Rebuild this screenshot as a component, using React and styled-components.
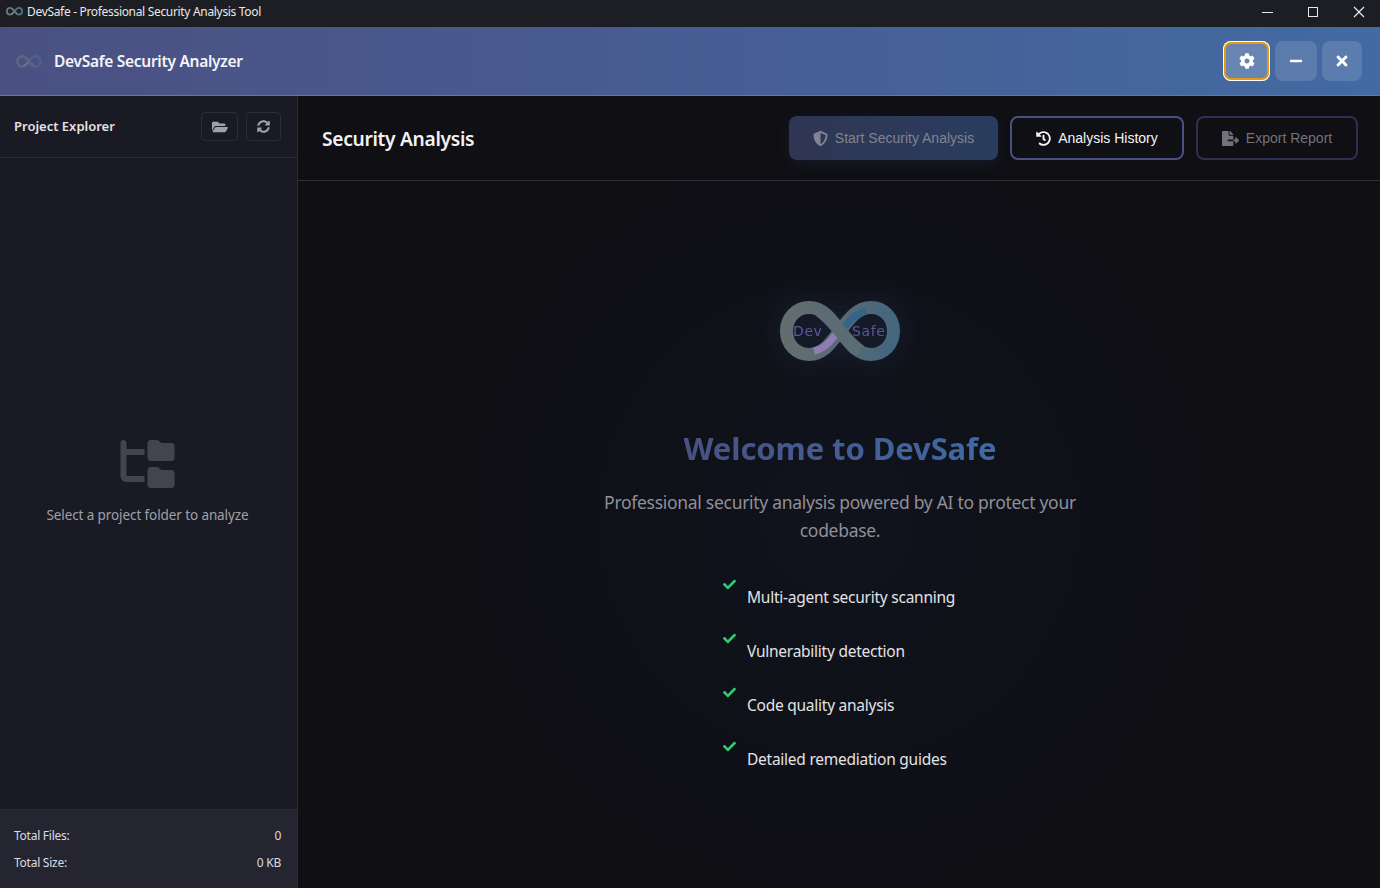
import React from 'react'
import styled, { createGlobalStyle } from 'styled-components'
import {
  FaCheck,
  FaCog,
  FaFileExport,
  FaFolderOpen,
  FaHistory,
  FaMinus,
  FaShieldAlt,
  FaSyncAlt,
  FaTimes,
} from 'react-icons/fa'
import { FaFolderTree } from 'react-icons/fa6'
import { VscChromeClose, VscChromeMaximize, VscChromeMinimize } from 'react-icons/vsc'

const FEATURES = [
  'Multi-agent security scanning',
  'Vulnerability detection',
  'Code quality analysis',
  'Detailed remediation guides',
]

const Logo = ({ size = 120, text = true, id = 'logo' }) => (
  <svg width={size} height={size * 0.5} viewBox="0 0 120 60" fill="none">
    <defs>
      <linearGradient id={`${id}-a`} x1="0" y1="0" x2="1" y2="0">
        <stop offset="0" stopColor="#6d7877" />
        <stop offset="0.55" stopColor="#5f7480" />
        <stop offset="1" stopColor="#4a7089" />
      </linearGradient>
    </defs>
    {/* whole figure of eight */}
    <path
      d="M60 30 C51 18 43 6.5 29 6.5 C16 6.5 6.5 17 6.5 30 C6.5 43 16 53.5 29 53.5 C43 53.5 51 42 60 30 C69 18 77 6.5 91 6.5 C104 6.5 113.5 17 113.5 30 C113.5 43 104 53.5 91 53.5 C77 53.5 69 42 60 30 Z"
      stroke={`url(#${id}-a)`}
      strokeWidth="13"
    />
    {/* coloured inner edges next to the crossing */}
    <path d="M34 50 C44 48 50 41 57 32" stroke="#9d88c6" strokeWidth="7" />
    <path d="M63 28 C69 20 75 13 86 10" stroke="#3c6c92" strokeWidth="7" />
    {/* strand on top at the crossing */}
    <path d="M40 10 C47 15 52 20 60 30 C68 40 73 45 80 50" stroke="#647680" strokeWidth="13" />
    {text && (
      <>
        <LogoText x="13" y="35">Dev</LogoText>
        <LogoText x="72" y="35">Safe</LogoText>
      </>
    )}
  </svg>
)

const App = () => {
  return (
    <>
      <GlobalStyle />
      <Window>
        <TitleBar>
          <TitleLeft>
            <Logo size={17} text={false} id="title-logo" />
            <span>DevSafe - Professional Security Analysis Tool</span>
          </TitleLeft>
          <WindowControls>
            <WindowControl><VscChromeMinimize /></WindowControl>
            <WindowControl><VscChromeMaximize /></WindowControl>
            <WindowControl><VscChromeClose /></WindowControl>
          </WindowControls>
        </TitleBar>

        <AppHeader>
          <Brand>
            <BrandLogo><Logo size={26} text={false} id="brand-logo" /></BrandLogo>
            <h1>DevSafe Security Analyzer</h1>
          </Brand>
          <HeaderActions>
            <HeaderButton $focused><FaCog /></HeaderButton>
            <HeaderButton><FaMinus /></HeaderButton>
            <HeaderButton $narrow><FaTimes /></HeaderButton>
          </HeaderActions>
        </AppHeader>

        <Body>
          <Sidebar>
            <SidebarHeader>
              <h3>Project Explorer</h3>
              <SidebarTools>
                <ToolButton $wide><FaFolderOpen /></ToolButton>
                <ToolButton><FaSyncAlt /></ToolButton>
              </SidebarTools>
            </SidebarHeader>
            <EmptyTree>
              <FaFolderTree />
              <p>Select a project folder to analyze</p>
            </EmptyTree>
            <Stats>
              <StatRow><span>Total Files:</span><span>0</span></StatRow>
              <StatRow><span>Total Size:</span><span>0 KB</span></StatRow>
            </Stats>
          </Sidebar>

          <Main>
            <MainHeader>
              <h2>Security Analysis</h2>
              <MainActions>
                <PrimaryButton><FaShieldAlt />Start Security Analysis</PrimaryButton>
                <OutlineButton><FaHistory />Analysis History</OutlineButton>
                <OutlineButton $disabled><FaFileExport />Export Report</OutlineButton>
              </MainActions>
            </MainHeader>
            <Welcome>
              <WelcomeLogo><Logo size={120} id="welcome-logo" /></WelcomeLogo>
              <WelcomeTitle>Welcome to DevSafe</WelcomeTitle>
              <WelcomeText>
                Professional security analysis powered by AI to protect your codebase.
              </WelcomeText>
              <FeatureList>
                {FEATURES.map((feature) => (
                  <Feature key={feature}>
                    <FaCheck />
                    <span>{feature}</span>
                  </Feature>
                ))}
              </FeatureList>
            </Welcome>
          </Main>
        </Body>
      </Window>
    </>
  )
}

const GlobalStyle = createGlobalStyle`
  html,
  body {
    margin: 0;
    height: 100%;
    background: #0f0f14;
  }

  #root {
    height: 100%;
  }

  * {
    box-sizing: border-box;
  }
`

const Window = styled.div`
  display: flex;
  flex-direction: column;
  height: 888px;
  overflow: hidden;
  font-family: 'Noto Sans', 'Open Sans', sans-serif;
  color: #fff;
`

const LogoText = styled.text`
  font-family: 'DejaVu Sans', sans-serif;
  font-size: 14px;
  letter-spacing: 0.6px;
  fill: #6060aa;
`

const TitleBar = styled.div`
  display: flex;
  align-items: center;
  justify-content: space-between;
  height: 27px;
  flex-shrink: 0;
  background: #1c1e24;
`

const TitleLeft = styled.div`
  display: flex;
  align-items: center;
  gap: 4px;
  padding: 0 0 4px 6px;
  font-size: 12px;
  letter-spacing: -0.32px;
  color: #e8e8ea;
`

const WindowControls = styled.div`
  display: flex;
  height: 100%;
  margin-right: -2px;
`

const WindowControl = styled.div`
  display: flex;
  align-items: center;
  justify-content: center;
  width: 46px;
  height: 23px;
  font-size: 16px;
  color: #e8e8e8;
`

const AppHeader = styled.header`
  display: flex;
  align-items: center;
  justify-content: space-between;
  height: 69px;
  flex-shrink: 0;
  padding: 0 18px 0 16px;
  background: linear-gradient(90deg, #4b5082 0%, #436aa3 100%);
  border-bottom: 1px solid #5f79a8;
`

const Brand = styled.div`
  display: flex;
  align-items: center;
  gap: 12px;

  h1 {
    margin: 0;
    font-size: 15.5px;
    font-weight: 600;
    letter-spacing: -0.28px;
    color: #f4f5f9;
  }
`

const BrandLogo = styled.div`
  display: flex;
  opacity: 0.55;
  filter: blur(0.5px);
`

const HeaderActions = styled.div`
  display: flex;
  align-items: center;
  gap: 5px;
`

const HeaderButton = styled.button`
  display: flex;
  align-items: center;
  justify-content: center;
  width: ${({ $narrow, $focused }) => ($narrow ? '40px' : $focused ? '47px' : '42px')};
  height: 40px;
  padding: 0;
  border: none;
  border-radius: 8px;
  background: rgba(255, 255, 255, ${({ $focused }) => ($focused ? 0.2 : 0.13)});
  color: #fff;
  font-size: ${({ $narrow, $focused }) => ($narrow || $focused ? '16px' : '14px')};
  ${({ $focused }) => $focused && 'box-shadow: inset 0 0 0 1px #fff, inset 0 0 0 3px #e49b0f;'}
`

const Body = styled.div`
  display: flex;
  flex: 1;
  min-height: 0;
`

const Sidebar = styled.aside`
  display: flex;
  flex-direction: column;
  width: 298px;
  flex-shrink: 0;
  background: #1a1a24;
  border-right: 1px solid #2b2b37;
`

const SidebarHeader = styled.div`
  display: flex;
  align-items: center;
  justify-content: space-between;
  height: 62px;
  flex-shrink: 0;
  padding: 0 16px 0 14px;
  border-bottom: 1px solid #2b2b37;

  h3 {
    margin: 0 0 2px;
    font-size: 13px;
    font-weight: 600;
    color: #e2e2e6;
  }
`

const SidebarTools = styled.div`
  display: flex;
  gap: 8px;
`

const ToolButton = styled.button`
  display: flex;
  align-items: center;
  justify-content: center;
  width: ${({ $wide }) => ($wide ? '37px' : '35px')};
  height: 29px;
  padding: 0;
  background: transparent;
  border: 1px solid #2d2d3a;
  border-radius: 4px;
  color: #a0a0a8;
  font-size: ${({ $wide }) => ($wide ? '16px' : '13px')};
`

const EmptyTree = styled.div`
  display: flex;
  flex: 1;
  flex-direction: column;
  align-items: center;
  justify-content: center;
  padding: 0 2px 3px 0;
  color: #44444f;

  svg {
    width: 55px;
    height: 48px;
    margin-bottom: 18px;
  }

  p {
    margin: 0;
    font-size: 13.5px;
    letter-spacing: -0.1px;
    color: #a0a0a8;
  }
`

const Stats = styled.div`
  display: flex;
  flex-direction: column;
  gap: 9px;
  height: 79px;
  flex-shrink: 0;
  padding: 17px 16px 0 14px;
  background: #252532;
  border-top: 1px solid #2d2d3a;
`

const StatRow = styled.div`
  display: flex;
  justify-content: space-between;
  font-size: 12px;
  line-height: 18px;
  letter-spacing: -0.25px;
  color: #dcdce0;
`

const Main = styled.main`
  display: flex;
  flex: 1;
  flex-direction: column;
  min-width: 0;
  background: #0f0f14;
`

const MainHeader = styled.div`
  display: flex;
  align-items: center;
  justify-content: space-between;
  height: 85px;
  flex-shrink: 0;
  padding: 0 22px 0 24px;
  border-bottom: 1px solid #2d2d3a;

  h2 {
    margin: 1px 0 0;
    font-size: 19.2px;
    font-weight: 600;
    letter-spacing: -0.3px;
    color: #f2f2f4;
  }
`

const MainActions = styled.div`
  display: flex;
  gap: 12px;
`

const ActionButton = styled.button`
  display: flex;
  align-items: center;
  justify-content: center;
  gap: 7px;
  height: 44px;
  padding: 0;
  border-radius: 8px;
  font-family: 'Liberation Sans', Arial, sans-serif;
  font-size: 14px;

  svg {
    font-size: 15px;
  }
`

const PrimaryButton = styled(ActionButton)`
  width: 209px;
  border: none;
  background: linear-gradient(90deg, #2f3553 0%, #2a3d5f 100%);
  color: #80848f;
  box-shadow: 0 4px 14px rgba(50, 65, 110, 0.22);
`

const OutlineButton = styled(ActionButton)`
  width: ${({ $disabled }) => ($disabled ? '162px' : '174px')};
  background: transparent;
  border: 2px solid ${({ $disabled }) => ($disabled ? '#2d3050' : '#4a5080')};
  color: ${({ $disabled }) => ($disabled ? '#72727a' : '#f5f5f7')};

  svg {
    font-size: ${({ $disabled }) => ($disabled ? '17px' : '15px')};
  }
`

const Welcome = styled.div`
  display: flex;
  flex: 1;
  flex-direction: column;
  align-items: center;
  padding: 120px 0 0 2px;
  background: radial-gradient(circle at 50% 48%, #10131d 0%, #0f0f14 62%);
`

const WelcomeLogo = styled.div`
  display: flex;
  opacity: 0.9;
  filter: blur(0.6px) drop-shadow(0 0 14px rgba(70, 100, 170, 0.25));
`

const WelcomeTitle = styled.h1`
  margin: 69px 0 0;
  font-size: 31px;
  line-height: 36px;
  font-weight: 700;
  letter-spacing: -0.1px;
  background: linear-gradient(90deg, #4a5080, #3f6aa6);
  -webkit-background-clip: text;
  background-clip: text;
  color: transparent;
`

const WelcomeText = styled.p`
  width: 500px;
  margin: 22px 0 0;
  font-size: 17.5px;
  line-height: 28px;
  letter-spacing: -0.29px;
  text-align: center;
  color: #8f8f98;
`

const FeatureList = styled.ul`
  display: flex;
  flex-direction: column;
  gap: 14px;
  align-self: center;
  width: 234px;
  margin: 33px 0 0;
  padding: 0;
  list-style: none;
`

const Feature = styled.li`
  position: relative;
  height: 40px;
  padding: 8px 0 0 24px;
  font-size: 15.5px;
  line-height: 24px;
  letter-spacing: -0.25px;
  white-space: nowrap;
  color: #e2e2e6;

  svg {
    position: absolute;
    top: 1px;
    left: 0;
    font-size: 13px;
    color: #2ecc71;
  }
`

export default App
